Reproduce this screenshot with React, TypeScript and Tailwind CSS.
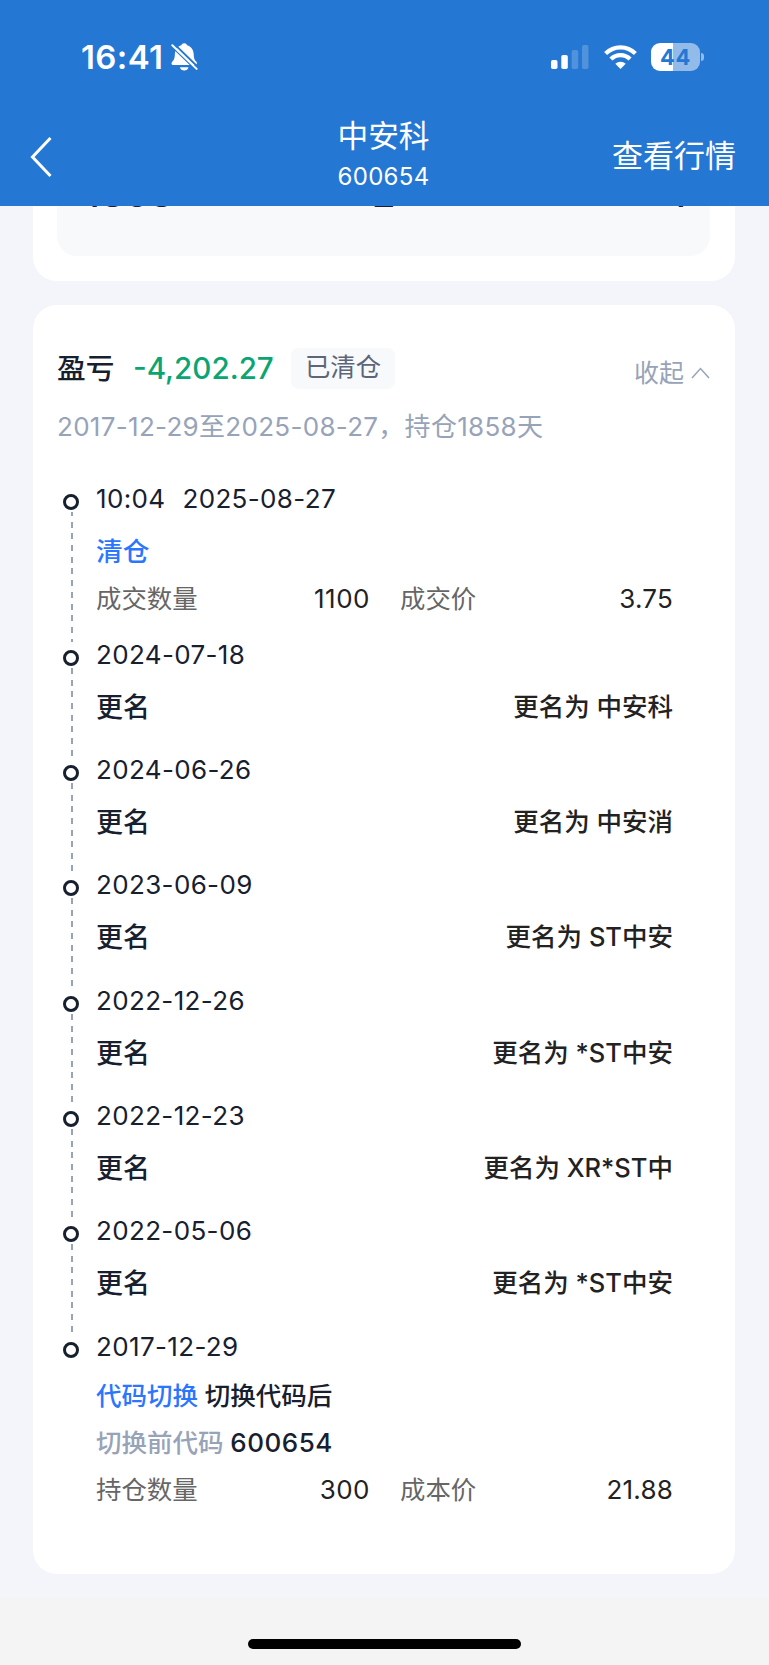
const F = "font-[Inter,'Noto_Sans_CJK_SC',sans-serif]";

type Item = { date: string; renamed: string };

const renames: Item[] = [
  { date: "2024-07-18", renamed: "中安科" },
  { date: "2024-06-26", renamed: "中安消" },
  { date: "2023-06-09", renamed: "ST中安" },
  { date: "2022-12-26", renamed: "*ST中安" },
  { date: "2022-12-23", renamed: "XR*ST中" },
  { date: "2022-05-06", renamed: "*ST中安" },
];

function Rail({ first, last }: { first?: boolean; last?: boolean }) {
  return (
    <div className="flex w-[18px] shrink-0 flex-col items-center pt-[11px]">
      <div className="h-4 w-4 shrink-0 rounded-full border-[3px] border-[#17202e]" />
      {!last && (
        <div
          className={`-mb-[3px] mt-[2px] ml-px w-[2px] flex-1 bg-[repeating-linear-gradient(to_bottom,#97a3b8_0_6px,transparent_6px_11.7px)] ${
            first ? "bg-[position:0_-2px]" : ""
          }`}
        />
      )}
    </div>
  );
}

function DateText({ children }: { children: string }) {
  return <div className="h-8 text-[26px] leading-8 tracking-[0.350px] text-[#17202e]">{children}</div>;
}

function Stats({ a, av, b, bv }: { a: string; av: string; b: string; bv: string }) {
  return (
    <div className="flex h-8 items-center text-[25.400px] leading-8 text-[#666]">
      <span className="w-[136px]">{a}</span>
      <span className="w-[138px] text-right text-[26px] tracking-[0.500px] text-[#222]">{av}</span>
      <span className="ml-[30px] w-[120px]">{b}</span>
      <span className="ml-auto text-right text-[26px] tracking-[0.200px] text-[#222]">{bv}</span>
    </div>
  );
}

function StatusBar() {
  return (
    <div className="flex h-[114px] items-center pl-[81px] pr-[65px] text-white">
      <span className="w-[84px] text-[33px] font-semibold leading-10 tracking-[0.400px]">16:41</span>
      <svg className="ml-[6px] h-7 w-[27px]" viewBox="0 0 27 28">
        <path fill="#fff" d="M13.200.3c1.500 0 2.600.8 2.900 1.900 4.100 1.100 6.400 4.500 6.600 8.700.2 4.600.9 6 2.500 7.700 1.200 1.300.9 3.400-.9 3.400H2.100C.3 22 .1 20 1.200 18.700c1.800-1.900 2.500-3.400 2.700-7.800.2-4.200 2.400-7.600 6.500-8.700C10.700 1.100 11.700.3 13.200.3zM8.900 24.300h8.600c-.3 2-2.100 3.300-4.300 3.300s-4-1.300-4.300-3.300z" />
        <path d="M1.500-.6L28 25" stroke="#2577d4" strokeWidth="2" />
        <path d="M0 2.900l26.500 25.500" stroke="#2577d4" strokeWidth="1.600" />
        <path d="M1.300 2.300l24.300 23.600" stroke="#fff" strokeWidth="2" strokeLinecap="round" />
      </svg>
      <div className="ml-auto flex items-center">
        <svg className="h-6 w-[38px]" viewBox="0 0 38 24" fill="#fff">
          <rect y="15" width="6.500" height="9" rx="1.800" />
          <rect x="10.300" y="10" width="6.500" height="14" rx="1.800" />
          <rect x="20.700" y="5" width="6.500" height="19" rx="1.800" opacity=".2" />
          <rect x="31" width="6.500" height="24" rx="1.800" opacity=".2" />
        </svg>
        <svg className="ml-[15px] h-6 w-[33px]" viewBox="0 0 33 24" fill="none" stroke="#fff" strokeWidth="4.200">
          <path d="M1.600 8.500C9.800.2 23.200.2 31.400 8.500" />
          <path d="M6.900 14.100c5.400-5.300 13.800-5.300 19.200 0" />
          <path d="M11.300 18.700c3-2.700 7.400-2.700 10.400 0L16.500 24z" fill="#fff" stroke="none" />
        </svg>
        <div className="ml-[14px] flex h-[28px] w-[49px] items-center justify-center rounded-[9px] bg-[linear-gradient(to_right,#fff_45%,#92bbe9_45%)] text-[22px] font-bold leading-7 tracking-[0.500px] text-[#2577d4]">
          44
        </div>
        <div className="ml-[1px] h-2 w-[3px] rounded-r-full bg-[#92bbe9]" />
      </div>
    </div>
  );
}

export default function App() {
  return (
    <div className={`${F} flex h-[1665px] w-[769px] flex-col overflow-hidden whitespace-nowrap bg-[#f3f5fa]`}>
      <header className="h-[206px] shrink-0 bg-[#2577d4] text-white">
        <StatusBar />
        <div className="grid h-[92px] grid-cols-[1fr_auto_1fr] pl-[31px] pr-[33px]">
          <svg className="-ml-px mt-[22px] h-[42px] w-[22px]" viewBox="0 0 22 42" fill="none" stroke="#fff" strokeWidth="3">
            <path d="M20.500 2L2.500 21l18 19" />
          </svg>
          <div className="flex flex-col items-center">
            <div className="mt-[2px] h-10 text-[30.700px] leading-10">中安科</div>
            <div className="mt-[7px] h-7 text-[24px] leading-7 tracking-[0.300px]">600654</div>
          </div>
          <div className="mt-[22px] text-right text-[31px] leading-10">查看行情</div>
        </div>
      </header>

      <section className="ml-[33px] mr-[34px] h-[75px] shrink-0 rounded-b-[24px] bg-white pl-6 pr-[25px]">
        <div className="flex h-[50px] items-start overflow-hidden rounded-b-[20px] bg-[#f7f9fb] pl-[27px] pr-[24px] text-[38px] font-medium text-[#17202e]">
          <span className="-mt-[33px] w-[200px] leading-10 tracking-[0.800px]">1858</span>
          <span className="-mt-[33px] ml-[88px] leading-10">2</span>
          <span className="-mt-[33px] ml-auto leading-10">1</span>
        </div>
      </section>

      <section className="ml-[33px] mr-[34px] mt-6 h-[1269px] shrink-0 rounded-[24px] bg-white pl-6">
        <div className="flex pr-[25px] pt-[43px]">
          <span className="mt-[1px] w-[76px] text-[28.700px] font-medium leading-10 text-[#17202e]">盈亏</span>
          <span className="w-[158px] text-[29.600px] font-medium leading-10 text-[#0aa573]">-4,202.27</span>
          <span className="h-[41px] w-[104px] rounded-lg bg-[#f7f9fb] text-center text-[25.400px] leading-[38px] text-[#5d6679]">已清仓</span>
          <span className="ml-auto mt-[5px] text-[25px] leading-10 text-[#97a3b8]">收起</span>
          <svg className="ml-[7px] mt-[19px] h-3 w-[19px]" viewBox="0 0 19 12" fill="none" stroke="#97a3b8" strokeWidth="1.500">
            <path d="M1 11l8.500-9.500L18 11" />
          </svg>
        </div>
        <div className="mt-[18px] h-8 text-[26px] leading-8 tracking-[0.300px] text-[#97a3b8]">2017-12-29至2025-08-27，持仓1858天</div>

        <div className="mt-[40px] pl-[5px] pr-[62px]">
          <div className="flex h-[155.500px]">
            <Rail first />
            <div className="ml-[16px] flex-1">
              <div className="flex gap-[17px]">
                <DateText>10:04</DateText>
                <DateText>2025-08-27</DateText>
              </div>
              <div className="mt-[20px] h-8 text-[26.700px] font-medium leading-8 text-[#2b76ff]">清仓</div>
              <div className="mt-[16px]"><Stats a="成交数量" av="1100" b="成交价" bv="3.75" /></div>
            </div>
          </div>
          {renames.map((r) => (
            <div key={r.date} className="flex h-[115.350px]">
              <Rail />
              <div className="ml-[16px] flex-1">
                <DateText>{r.date}</DateText>
                <div className="mt-[21px] flex h-8 justify-between font-medium leading-8">
                  <span className="text-[27px] text-[#17202e]">更名</span>
                  <span className="-mt-px text-[25.500px] text-[#222]">更名为 {r.renamed}</span>
                </div>
              </div>
            </div>
          ))}
          <div className="flex">
            <Rail last />
            <div className="ml-[16px] flex-1">
              <DateText>2017-12-29</DateText>
              <div className="mt-[17px] h-8 text-[25.500px] font-medium leading-8 text-[#17202e]">
                <span className="text-[#2b76ff]">代码切换</span> 切换代码后
              </div>
              <div className="mt-[15px] h-8 text-[25.500px] font-medium leading-8 text-[#17202e]">
                <span className="text-[#97a3b8]">切换前代码</span>{" "}
                <span className="text-[26px] tracking-[0.500px]">600654</span>
              </div>
              <div className="mt-[15px]"><Stats a="持仓数量" av="300" b="成本价" bv="21.88" /></div>
            </div>
          </div>
        </div>
      </section>

      <footer className="mt-6 flex flex-1 justify-center bg-[#f4f4f4] pt-[41px]">
        <div className="h-[10px] w-[273px] rounded-full bg-black" />
      </footer>
    </div>
  );
}
